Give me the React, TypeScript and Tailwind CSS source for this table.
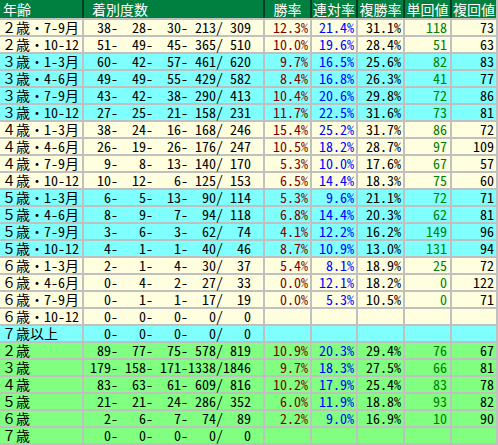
import clsx from 'clsx';

type Row = {
  label: string;
  counts: [number, number, number, number, number];
  win?: string;
  top2?: string;
  top3?: string;
  winRet?: number;
  placeRet?: number;
  bg: 'cream' | 'cyan' | 'green';
};

const rows: Row[] = [
  { label: '２歳・7-9月', counts: [38, 28, 30, 213, 309], win: '12.3%', top2: '21.4%', top3: '31.1%', winRet: 118, placeRet: 73, bg: 'cream' },
  { label: '２歳・10-12', counts: [51, 49, 45, 365, 510], win: '10.0%', top2: '19.6%', top3: '28.4%', winRet: 51, placeRet: 63, bg: 'cream' },
  { label: '３歳・1-3月', counts: [60, 42, 57, 461, 620], win: '9.7%', top2: '16.5%', top3: '25.6%', winRet: 82, placeRet: 83, bg: 'cyan' },
  { label: '３歳・4-6月', counts: [49, 49, 55, 429, 582], win: '8.4%', top2: '16.8%', top3: '26.3%', winRet: 41, placeRet: 77, bg: 'cyan' },
  { label: '３歳・7-9月', counts: [43, 42, 38, 290, 413], win: '10.4%', top2: '20.6%', top3: '29.8%', winRet: 72, placeRet: 86, bg: 'cyan' },
  { label: '３歳・10-12', counts: [27, 25, 21, 158, 231], win: '11.7%', top2: '22.5%', top3: '31.6%', winRet: 73, placeRet: 81, bg: 'cyan' },
  { label: '４歳・1-3月', counts: [38, 24, 16, 168, 246], win: '15.4%', top2: '25.2%', top3: '31.7%', winRet: 86, placeRet: 72, bg: 'cream' },
  { label: '４歳・4-6月', counts: [26, 19, 26, 176, 247], win: '10.5%', top2: '18.2%', top3: '28.7%', winRet: 97, placeRet: 109, bg: 'cream' },
  { label: '４歳・7-9月', counts: [9, 8, 13, 140, 170], win: '5.3%', top2: '10.0%', top3: '17.6%', winRet: 67, placeRet: 57, bg: 'cream' },
  { label: '４歳・10-12', counts: [10, 12, 6, 125, 153], win: '6.5%', top2: '14.4%', top3: '18.3%', winRet: 75, placeRet: 60, bg: 'cream' },
  { label: '５歳・1-3月', counts: [6, 5, 13, 90, 114], win: '5.3%', top2: '9.6%', top3: '21.1%', winRet: 72, placeRet: 71, bg: 'cyan' },
  { label: '５歳・4-6月', counts: [8, 9, 7, 94, 118], win: '6.8%', top2: '14.4%', top3: '20.3%', winRet: 62, placeRet: 81, bg: 'cyan' },
  { label: '５歳・7-9月', counts: [3, 6, 3, 62, 74], win: '4.1%', top2: '12.2%', top3: '16.2%', winRet: 149, placeRet: 96, bg: 'cyan' },
  { label: '５歳・10-12', counts: [4, 1, 1, 40, 46], win: '8.7%', top2: '10.9%', top3: '13.0%', winRet: 131, placeRet: 94, bg: 'cyan' },
  { label: '６歳・1-3月', counts: [2, 1, 4, 30, 37], win: '5.4%', top2: '8.1%', top3: '18.9%', winRet: 25, placeRet: 72, bg: 'cream' },
  { label: '６歳・4-6月', counts: [0, 4, 2, 27, 33], win: '0.0%', top2: '12.1%', top3: '18.2%', winRet: 0, placeRet: 122, bg: 'cream' },
  { label: '６歳・7-9月', counts: [0, 1, 1, 17, 19], win: '0.0%', top2: '5.3%', top3: '10.5%', winRet: 0, placeRet: 71, bg: 'cream' },
  { label: '６歳・10-12', counts: [0, 0, 0, 0, 0], bg: 'cream' },
  { label: '７歳以上', counts: [0, 0, 0, 0, 0], bg: 'cyan' },
  { label: '２歳', counts: [89, 77, 75, 578, 819], win: '10.9%', top2: '20.3%', top3: '29.4%', winRet: 76, placeRet: 67, bg: 'green' },
  { label: '３歳', counts: [179, 158, 171, 1338, 1846], win: '9.7%', top2: '18.3%', top3: '27.5%', winRet: 66, placeRet: 81, bg: 'green' },
  { label: '４歳', counts: [83, 63, 61, 609, 816], win: '10.2%', top2: '17.9%', top3: '25.4%', winRet: 83, placeRet: 78, bg: 'green' },
  { label: '５歳', counts: [21, 21, 24, 286, 352], win: '6.0%', top2: '11.9%', top3: '18.8%', winRet: 93, placeRet: 82, bg: 'green' },
  { label: '６歳', counts: [2, 6, 7, 74, 89], win: '2.2%', top2: '9.0%', top3: '16.9%', winRet: 10, placeRet: 90, bg: 'green' },
  { label: '７歳', counts: [0, 0, 0, 0, 0], bg: 'green' },
];

const cols = 'grid grid-cols-[82px_179px_45px_44px_45px_45px_44px] gap-x-[2px]';

const bgClass = {
  cream: 'bg-[#ffffe0]',
  cyan: 'bg-[#80ffff]',
  green: 'bg-[#80ff80]',
};

const pad = (n: number, w: number) => String(n).padStart(w, ' ');

const formatCounts = ([a, b, c, d, e]: Row['counts']) =>
  `${pad(a, 3)}-${pad(b, 4)}-${pad(c, 4)}-${pad(d, 4)}/${pad(e, 4)}`;

const headers = ['勝率', '連対率', '複勝率', '単回値', '複回値'];

export default function App() {
  return (
    <div
      className="w-[498px] h-[445px] bg-[#c0c0c0] pr-[2px] pb-[2px] flex flex-col gap-y-[2px] text-[14px] text-black overflow-hidden"
      style={{ fontFamily: '"Noto Sans Mono CJK JP", "Noto Sans CJK JP", monospace' }}
    >
      <div className={clsx(cols, 'bg-[#0a3a20] h-[18px] leading-[18px] text-white')}>
        <div className="bg-[#008040] pl-[3px]">年齢</div>
        <div className="bg-[#008040] pl-[8px]">着別度数</div>
        {headers.map((h) => (
          <div key={h} className="bg-[#008040] text-center">
            {h}
          </div>
        ))}
      </div>
      {rows.map((r) => {
        const bg = bgClass[r.bg];
        return (
          <div key={r.label} className={clsx(cols, 'h-[15px] leading-[15px]')}>
            <div className={clsx(bg, 'pl-[2px] whitespace-nowrap')}>{r.label}</div>
            <div className={clsx(bg, 'pl-[6px] whitespace-pre')}>{formatCounts(r.counts)}</div>
            <div className={clsx(bg, 'text-right pr-[2px] text-[#800000]')}>{r.win}</div>
            <div className={clsx(bg, 'text-right pr-[2px] text-[#0000ff]')}>{r.top2}</div>
            <div className={clsx(bg, 'text-right pr-[2px]')}>{r.top3}</div>
            <div className={clsx(bg, 'text-right pr-[3px] text-[#008000]')}>{r.winRet}</div>
            <div className={clsx(bg, 'text-right pr-[2px]')}>{r.placeRet}</div>
          </div>
        );
      })}
    </div>
  );
}
